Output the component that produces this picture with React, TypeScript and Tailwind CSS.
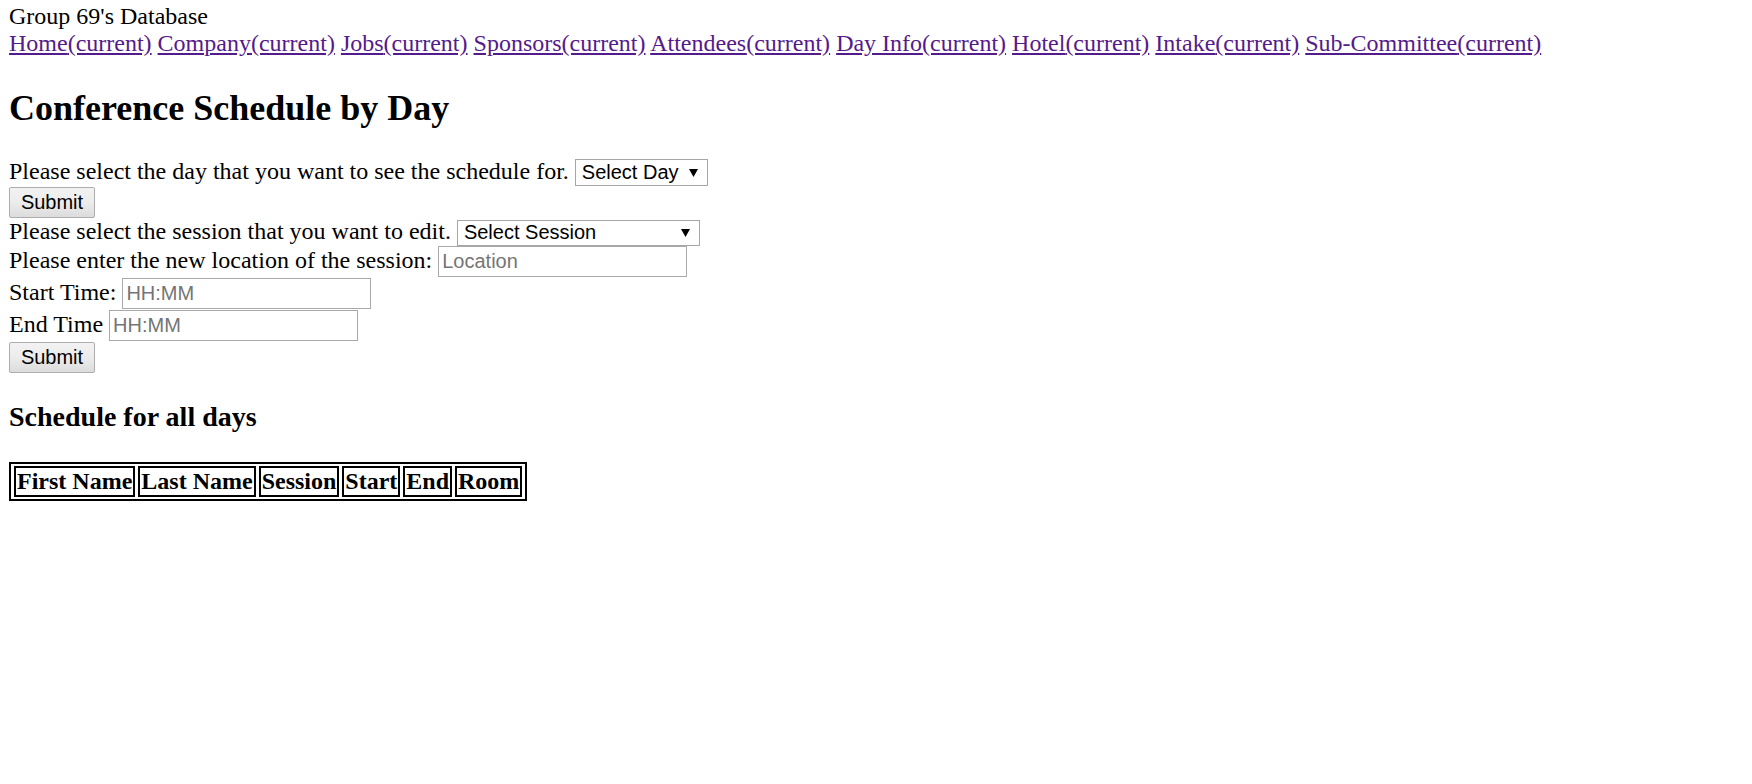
import { Fragment } from 'react';

const navLinks = ['Home', 'Company', 'Jobs', 'Sponsors', 'Attendees', 'Day Info', 'Hotel', 'Intake', 'Sub-Committee'];
const columns = ['First Name', 'Last Name', 'Session', 'Start', 'End', 'Room'];

function FakeSelect({ label, width, height }: { label: string; width: string; height: string }) {
  return (
    <span
      className={`inline-flex items-center justify-between ${width} ${height} border border-[#a6a6a6] bg-white pl-[6px] pr-[9px] align-baseline font-['Liberation_Sans',Arial,sans-serif] text-[20px] leading-[23px] text-black`}
    >
      {label}
      <svg width="9" height="8" viewBox="0 0 9 8" className="shrink-0">
        <polygon points="0,0 9,0 4.5,8" fill="#000" />
      </svg>
    </span>
  );
}

function TextBox({ placeholder }: { placeholder: string }) {
  return (
    <input
      type="text"
      placeholder={placeholder}
      className="h-[31px] w-[249px] border border-[#a9a9a9] bg-white px-[3px] align-baseline font-['Liberation_Sans',Arial,sans-serif] text-[20px] text-black placeholder:text-[#757575] outline-none"
    />
  );
}

function SubmitButton() {
  return (
    <button className="h-[31px] w-[86px] rounded-[2px] border border-[#adadad] bg-linear-to-b from-[#f2f2f2] via-[#ececec] to-[#dcdcdc] font-['Liberation_Sans',Arial,sans-serif] text-[20px] leading-[23px] text-black">
      Submit
    </button>
  );
}

export default function App() {
  return (
    <div className="min-h-screen bg-white pl-[9px] pt-[3px] font-['Liberation_Serif','Times_New_Roman',serif] text-[24px] leading-[26px] text-black">
      <div className="h-[26px]">Group 69's Database</div>
      <div className="h-[27px] pt-[1px] whitespace-nowrap">
        {navLinks.map((name, i) => (
          <Fragment key={name}>
            {i > 0 && ' '}
            <a href="#" className="text-[#551a8b] underline">
              {name}(current)
            </a>
          </Fragment>
        ))}
      </div>

      <h2 className="mt-[32px] mb-[28px] text-[36px] font-bold leading-[41px]">Conference Schedule by Day</h2>

      <div className="h-[30px] pt-[1px] whitespace-nowrap">
        Please select the day that you want to see the schedule for.{' '}
        <FakeSelect label="Select Day" width="w-[133px]" height="h-[27px]" />
      </div>
      <div className="flex h-[30px] items-start">
        <SubmitButton />
      </div>
      <div className="h-[29px] pt-[1px] whitespace-nowrap">
        Please select the session that you want to edit.{' '}
        <FakeSelect label="Select Session" width="w-[243px]" height="h-[26px]" />
      </div>
      <div className="h-[32px] whitespace-nowrap">
        Please enter the new location of the session: <TextBox placeholder="Location" />
      </div>
      <div className="h-[32px] whitespace-nowrap">
        Start Time: <TextBox placeholder="HH:MM" />
      </div>
      <div className="h-[32px] whitespace-nowrap">
        End Time <TextBox placeholder="HH:MM" />
      </div>
      <div className="flex h-[31px] items-start">
        <SubmitButton />
      </div>

      <h3 className="mt-[28px] mb-[29px] text-[28px] font-bold leading-[32px]">Schedule for all days</h3>

      <table className="border-separate border-spacing-x-[3px] border-spacing-y-[2px] border-2 border-black">
        <thead>
          <tr>
            {columns.map((col) => (
              <th key={col} className="border-2 border-black px-[1px] py-0 text-[24px] font-bold leading-[27px] whitespace-nowrap">
                {col}
              </th>
            ))}
          </tr>
        </thead>
        <tbody></tbody>
      </table>
    </div>
  );
}
